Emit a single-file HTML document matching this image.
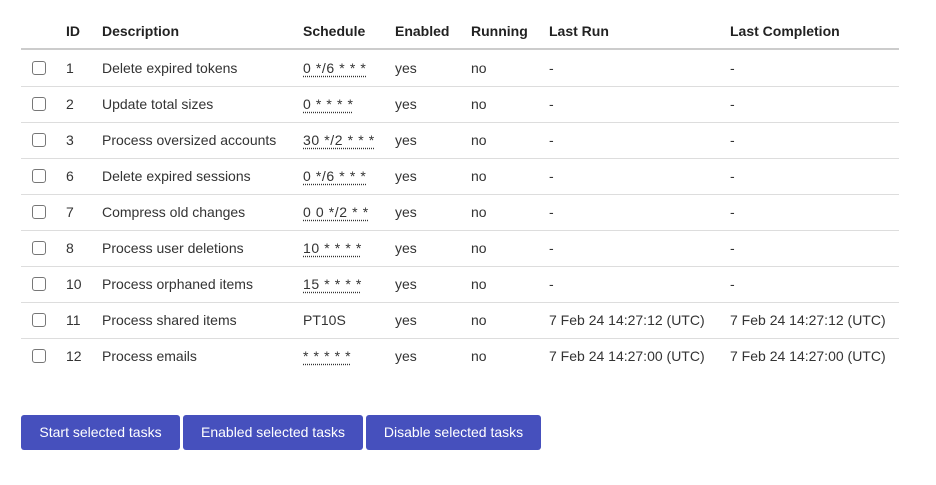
<!DOCTYPE html>
<html><head><style>
body{margin:0;background:#fff;font-family:"Liberation Sans",Arial,sans-serif;font-size:14px;color:#333;width:936px;height:485px;position:relative;overflow:hidden}
.r{position:absolute;left:21px;width:878px;height:36px}
.r span{position:absolute;top:0;line-height:36px;white-space:nowrap}
.h span{font-weight:bold;color:#222}
.b{border-bottom:1px solid #ddd}
.cb{position:absolute;left:11px;top:11px;width:12px;height:12px;border:1px solid #777;border-radius:3px;background:#fff}
.s{text-decoration:underline dotted;text-underline-offset:3px;letter-spacing:0.6px}
.btn{position:absolute;top:415px;height:35px;line-height:35px;background:#4650bd;color:#fff;border-radius:3px;text-align:center;font-size:14px}
</style></head><body>
<div class="r h" style="top:13px;height:35px;border-bottom:2px solid #ccc">
<span style="left:45px">ID</span><span style="left:81px">Description</span><span style="left:282px">Schedule</span><span style="left:374px">Enabled</span><span style="left:450px">Running</span><span style="left:528px">Last Run</span><span style="left:709px">Last Completion</span></div>

<div class="r b" style="top:50px"><i class="cb"></i><span style="left:45px">1</span><span style="left:81px">Delete expired tokens</span><span class="s" style="left:282px">0 */6 * * *</span><span style="left:374px">yes</span><span style="left:450px">no</span><span style="left:528px">-</span><span style="left:709px">-</span></div>
<div class="r b" style="top:86px"><i class="cb"></i><span style="left:45px">2</span><span style="left:81px">Update total sizes</span><span class="s" style="left:282px">0 * * * *</span><span style="left:374px">yes</span><span style="left:450px">no</span><span style="left:528px">-</span><span style="left:709px">-</span></div>
<div class="r b" style="top:122px"><i class="cb"></i><span style="left:45px">3</span><span style="left:81px">Process oversized accounts</span><span class="s" style="left:282px">30 */2 * * *</span><span style="left:374px">yes</span><span style="left:450px">no</span><span style="left:528px">-</span><span style="left:709px">-</span></div>
<div class="r b" style="top:158px"><i class="cb"></i><span style="left:45px">6</span><span style="left:81px">Delete expired sessions</span><span class="s" style="left:282px">0 */6 * * *</span><span style="left:374px">yes</span><span style="left:450px">no</span><span style="left:528px">-</span><span style="left:709px">-</span></div>
<div class="r b" style="top:194px"><i class="cb"></i><span style="left:45px">7</span><span style="left:81px">Compress old changes</span><span class="s" style="left:282px">0 0 */2 * *</span><span style="left:374px">yes</span><span style="left:450px">no</span><span style="left:528px">-</span><span style="left:709px">-</span></div>
<div class="r b" style="top:230px"><i class="cb"></i><span style="left:45px">8</span><span style="left:81px">Process user deletions</span><span class="s" style="left:282px">10 * * * *</span><span style="left:374px">yes</span><span style="left:450px">no</span><span style="left:528px">-</span><span style="left:709px">-</span></div>
<div class="r b" style="top:266px"><i class="cb"></i><span style="left:45px">10</span><span style="left:81px">Process orphaned items</span><span class="s" style="left:282px">15 * * * *</span><span style="left:374px">yes</span><span style="left:450px">no</span><span style="left:528px">-</span><span style="left:709px">-</span></div>
<div class="r b" style="top:302px"><i class="cb"></i><span style="left:45px">11</span><span style="left:81px">Process shared items</span><span style="left:282px">PT10S</span><span style="left:374px">yes</span><span style="left:450px">no</span><span style="left:528px">7 Feb 24 14:27:12 (UTC)</span><span style="left:709px">7 Feb 24 14:27:12 (UTC)</span></div>
<div class="r" style="top:338px"><i class="cb"></i><span style="left:45px">12</span><span style="left:81px">Process emails</span><span class="s" style="left:282px">* * * * *</span><span style="left:374px">yes</span><span style="left:450px">no</span><span style="left:528px">7 Feb 24 14:27:00 (UTC)</span><span style="left:709px">7 Feb 24 14:27:00 (UTC)</span></div>

<div class="btn" style="left:21px;width:159px">Start selected tasks</div>
<div class="btn" style="left:183px;width:180px">Enabled selected tasks</div>
<div class="btn" style="left:366px;width:175px">Disable selected tasks</div>
</body></html>
